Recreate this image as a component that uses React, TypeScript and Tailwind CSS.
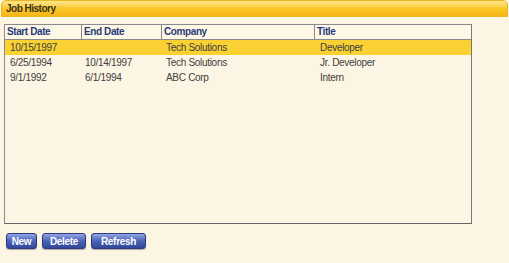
export default function App() {
  const rows = [
    { s: "10/15/1997", e: "", c: "Tech Solutions", t: "Developer", sel: true },
    { s: "6/25/1994", e: "10/14/1997", c: "Tech Solutions", t: "Jr. Developer" },
    { s: "9/1/1992", e: "6/1/1994", c: "ABC Corp", t: "Intern" },
  ];
  const btn =
    "h-[16px] rounded-[3px] border border-[#2a3a7a] bg-gradient-to-b from-[#93a5e4] via-[#4a62b8] to-[#33479a] text-white text-[10px] font-bold tracking-[-0.3px] flex items-center justify-center shadow-[0_1px_1px_rgba(0,0,0,0.3)]";
  return (
    <div className="w-[509px] h-[263px] bg-[#fdf5e3] overflow-hidden" style={{ fontFamily: "'Liberation Sans', Arial, sans-serif" }}>
      <div className="h-[17px] mx-[1px] rounded-t-[5px] border border-[#e8b820] bg-gradient-to-b from-[#fde58a] via-[#fbc824] to-[#f7b418] flex items-center pl-[4px]">
        <span className="text-[10px] font-bold text-[#3a3020] tracking-[-0.5px]">Job History</span>
      </div>
      <div className="ml-[4px] mt-[7px] w-[468px] h-[200px] border border-[#8a8a8a] border-r-[#777] border-b-[#666] bg-[#fdf5e3]">
        <div className="grid grid-cols-[77px_80px_153px_1fr] h-[15px] border-b border-[#8a8a8a] bg-[#fdf7e6]">
          {["Start Date", "End Date", "Company", "Title"].map((h, i) => (
            <div key={h} className={`pl-[2px] text-[10px] font-bold tracking-[-0.4px] text-[#2a3a78] leading-[14px] ${i < 3 ? "border-r border-[#8a8a8a]" : ""}`}>{h}</div>
          ))}
        </div>
        {rows.map((r, i) => (
          <div key={i} className={`grid grid-cols-[77px_80px_153px_1fr] h-[15px] text-[10px] tracking-[-0.3px] text-[#404040] leading-[15px] ${r.sel ? "bg-[#fad133]" : ""}`}>
            <div className="pl-[5px]">{r.s}</div>
            <div className="pl-[3px]">{r.e}</div>
            <div className="pl-[4px]">{r.c}</div>
            <div className="pl-[5px]">{r.t}</div>
          </div>
        ))}
      </div>
      <div className="flex gap-[5px] ml-[6px] mt-[9px]">
        <div className={`${btn} w-[31px]`}>New</div>
        <div className={`${btn} w-[44px]`}>Delete</div>
        <div className={`${btn} w-[55px]`}>Refresh</div>
      </div>
    </div>
  );
}
